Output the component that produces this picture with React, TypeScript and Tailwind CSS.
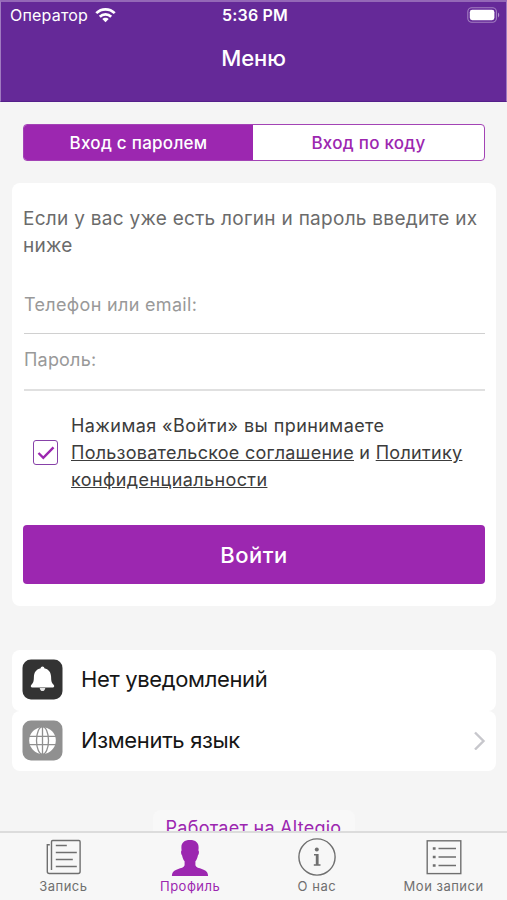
import React, { useState } from 'react';

const WifiIcon: React.FC = () => (
  <svg width="21" height="16" viewBox="0 0 21 16" fill="none" stroke="white" strokeWidth="2.7">
    <path d="M1.3 6.1C6.4 1 14.6 1 19.7 6.1" />
    <path d="M4.8 9.7C8 6.6 13 6.6 16.2 9.7" />
    <path d="M10.5 15.2 7.3 12C9 10.3 12 10.3 13.7 12Z" fill="white" stroke="none" />
  </svg>
);

const BatteryIcon: React.FC = () => (
  <svg width="33" height="16" viewBox="0 0 33 16">
    <rect x="0.8" y="0.8" width="28.6" height="14.4" rx="4" fill="none" stroke="white" strokeOpacity="0.4" strokeWidth="1.1" />
    <rect x="2.8" y="2.8" width="24.6" height="10.4" rx="2.4" fill="white" />
    <path d="M31 5.6C32.6 6.3 32.6 9.7 31 10.4Z" fill="white" fillOpacity="0.5" />
  </svg>
);

const BellIcon: React.FC = () => (
  <svg width="41" height="41" viewBox="0 0 41 41">
    <rect x="0.5" y="0.5" width="40" height="40" rx="8.5" fill="#333333" />
    <path
      d="M20.5 7.6c1.1 0 1.8.8 1.8 1.7 4.3 1 6.7 4 6.8 8.500.1 4.600.5 6 2.500 8 1.200 1.200.6 2.700-.8 2.700H10.200c-1.400 0-2-1.500-.8-2.700 2-2 2.400-3.400 2.500-8 .1-4.500 2.500-7.500 6.800-8.500 0-.9.700-1.700 1.800-1.700z"
      fill="white"
    />
    <path d="M17.7 29h5.600c-.3 2-1.300 3.100-2.800 3.100s-2.500-1.100-2.800-3.100z" fill="#e4e4e4" />
  </svg>
);

const GlobeIcon: React.FC = () => (
  <svg width="41" height="41" viewBox="0 0 41 41">
    <rect x="0.5" y="0.5" width="40" height="40" rx="8.5" fill="#909090" />
    <circle cx="20.5" cy="20.5" r="13.3" fill="white" />
    <g fill="none" stroke="#909090" strokeWidth="1.3">
      <path d="M20.5 7v27M7 16.3h27M7 24.7h27" />
      <ellipse cx="20.5" cy="20.5" rx="6" ry="13.8" />
    </g>
  </svg>
);

const BookingIcon: React.FC = () => (
  <svg width="38" height="38" viewBox="0 0 38 38" fill="none" stroke="#6f6f6f" strokeWidth="1.4">
    <path d="M7.5 32V3.700a1.200 1.200 0 0 1 1.200-1.200h26.200a1.200 1.200 0 0 1 1.200 1.200V33.500a2 2 0 0 1-2 2H5.300a2 2 0 0 1-2-2V6.800H5.800" />
    <path d="M11.800 7.500h11M11.800 14.500h21M11.800 21.500h17M11.800 28.500h21" strokeWidth="1.500" />
  </svg>
);

const ProfileIcon: React.FC = () => (
  <svg width="38" height="38" viewBox="0 0 38 38">
    <path
      d="M19 1.9c5.700 0 8.700 2.700 8.600 7.500 0 1.500-.2 2.400-.2 3.200.9.500.7 3.400-.5 4.800-.5 2.300-1.300 4.500-2.500 5.900v4c.8 2.400 3.400 2.700 7 3.900 3.300 1.100 5.500 2.600 5.700 6.900H.9c.2-4.300 2.400-5.800 5.700-6.900 3.600-1.200 6.200-1.500 7-3.900v-4c-1.200-1.400-2-3.600-2.500-5.900-1.200-1.400-1.400-4.300-.5-4.800 0-.8-.2-1.700-.2-3.200C10.300 4.600 13.300 1.900 19 1.900z"
      fill="#9c27b0"
    />
  </svg>
);

const InfoIcon: React.FC = () => (
  <svg width="38" height="38" viewBox="0 0 38 38">
    <circle cx="19" cy="19" r="18.1" fill="none" stroke="#6f6f6f" strokeWidth="1.4" />
    <circle cx="18.8" cy="11.5" r="2" fill="#6f6f6f" />
    <path d="M16 16h4.600v10.300h1.900v1.500h-6.700v-1.500h2v-8.800H16z" fill="#6f6f6f" />
  </svg>
);

const RecordsIcon: React.FC = () => (
  <svg width="38" height="38" viewBox="0 0 38 38" fill="none" stroke="#6f6f6f">
    <rect x="2.2" y="2.8" width="33.6" height="32.8" strokeWidth="1.4" />
    <path d="M13.500 10.500H31M13.500 19H31M13.500 27.500H31" strokeWidth="1.5" />
    <path d="M7.800 10.500h2.800M7.800 19h2.800M7.800 27.500h2.800" strokeWidth="2.4" />
  </svg>
);

const tabs = [
  { id: 'booking', label: 'Запись', icon: <BookingIcon /> },
  { id: 'profile', label: 'Профиль', icon: <ProfileIcon /> },
  { id: 'about', label: 'О нас', icon: <InfoIcon /> },
  { id: 'records', label: 'Мои записи', icon: <RecordsIcon /> }
];

const App: React.FC = () => {
  const [accepted, setAccepted] = useState(true);
  const activeTab = 'profile';

  return (
    <div className="flex h-[900px] w-[507px] flex-col overflow-hidden bg-[#f5f5f5] font-['Inter','Liberation_Sans',sans-serif]">
      {/* Header */}
      <header className="h-[102px] shrink-0 border-x border-t-2 border-b border-x-[#a07ac0] border-t-[#9468b7] border-b-[#54208a] bg-[#652998] text-white">
        <div className="grid h-[25px] grid-cols-3 items-center pr-[6px] pl-[9px]">
          <div className="flex items-center gap-[7px]">
            <span className="text-[16px] tracking-[0.2px]">Оператор</span>
            <WifiIcon />
          </div>
          <span className="text-center text-[16px] font-semibold tracking-[0.2px]">5:36 PM</span>
          <div className="flex justify-end">
            <BatteryIcon />
          </div>
        </div>
        <h1 className="mt-[14px] text-center text-[22px] leading-[34px] font-medium tracking-[-0.1px]">Меню</h1>
      </header>

      <main className="min-h-0 flex-1 overflow-hidden px-3 pt-[22px]">
        {/* Login method */}
        <div className="mr-[10px] ml-[11px] flex h-[37px] overflow-hidden rounded-[4px] border border-[#a343b5] bg-white text-[17px] font-medium">
          <button className="w-[229px] bg-[#9c27b0] pt-[2px] tracking-[0.27px] text-white">Вход с паролем</button>
          <button className="flex-1 pt-[2px] tracking-[0.27px] text-[#9c27b0]">Вход по коду</button>
        </div>

        {/* Login form */}
        <section className="mt-[22px] mr-[-1px] h-[423px] rounded-[8px] bg-white pt-[22px] pr-[11px] pl-[11px]">
          <p className="text-[19px] leading-[27px] tracking-[0.28px] whitespace-nowrap text-[#6b6b6b]">
            Если у вас уже есть логин и пароль введите их
            <br />
            ниже
          </p>
          <div className="mt-[26px] ml-px flex h-[49px] items-start border-b border-[#d0d0d0] pt-[7px]">
            <span className="text-[18px] leading-[26px] tracking-[0.32px] text-[#999999]">Телефон или email:</span>
          </div>
          <div className="ml-px flex h-[57px] items-start border-b-2 border-[#e0e0e0] pt-[13px]">
            <span className="text-[18px] leading-[26px] tracking-[0.2px] text-[#999999]">Пароль:</span>
          </div>
          <div className="mt-[21px] flex">
            <button
              aria-label="Принять условия"
              onClick={() => setAccepted(!accepted)}
              className="mt-[28px] ml-[10px] flex size-[25px] shrink-0 items-center justify-center rounded-[3px] border-[1.5px] border-[#8741a8]"
            >
              {accepted && (
                <svg width="18" height="16" viewBox="0 0 18 16" fill="none" stroke="#9c27b0" strokeWidth="2.4">
                  <path d="M1.500 8 6.300 12.800 16.500 2.300" />
                </svg>
              )}
            </button>
            <p className="ml-[13px] text-[18px] leading-[27px] tracking-[0.3px] whitespace-nowrap text-[#3c3c3c]">
              <span className="tracking-[0.42px]">Нажимая «Войти» вы принимаете</span>
              <br />
              <a className="tracking-[0.26px] underline">Пользовательское соглашение</a> и <a className="underline">Политику</a>
              <br />
              <a className="tracking-[0.4px] underline">конфиденциальности</a>
            </p>
          </div>
          <button className="mt-[32px] h-[59px] w-full rounded-[4px] bg-[#9c27b0] pt-px text-[22px] font-medium tracking-[0.5px] text-white">
            Войти
          </button>
        </section>

        {/* Settings */}
        <div className="mt-[44px] mr-[-1px]">
          <div className="flex h-[61px] items-center rounded-[8px] bg-white pb-[3px] pl-[10px]">
            <BellIcon />
            <span className="ml-[18px] text-[22px] tracking-[-0.35px] text-[#161616]">Нет уведомлений</span>
          </div>
          <div className="flex h-[60px] items-center rounded-[8px] bg-white pr-[10px] pb-[2px] pl-[10px]">
            <GlobeIcon />
            <span className="ml-[18px] flex-1 text-[22px] tracking-[-0.35px] text-[#161616]">Изменить язык</span>
            <svg width="13" height="20" viewBox="0 0 13 20" fill="none" stroke="#c7c7cc" strokeWidth="2.4">
              <path d="M2 2.500 10.500 11 2 19.500" />
            </svg>
          </div>
        </div>

        <div className="mx-auto mt-[39px] w-[202px] rounded-[8px] bg-[#f8f8f8] pt-[5px] text-center text-[18px] leading-[26px] tracking-[0.27px] whitespace-nowrap text-[#9c27b0]">
          Работает на Altegio
        </div>
      </main>

      {/* Tab bar */}
      <nav className="grid h-[69px] shrink-0 grid-cols-4 border-t-2 border-[#dcdcdc] bg-[#f7f7f7]">
        {tabs.map(tab => (
          <button key={tab.id} className="flex flex-col items-center pt-[5px]">
            {tab.icon}
            <span
              className={
                tab.id === activeTab
                  ? 'mt-px text-[13px] leading-[18px] tracking-[0.5px] whitespace-nowrap text-[#9c27b0]'
                  : 'mt-px text-[13px] leading-[18px] tracking-[0.5px] whitespace-nowrap text-[#6f6f6f]'
              }
            >
              {tab.label}
            </span>
          </button>
        ))}
      </nav>
    </div>
  );
};

export default App;
